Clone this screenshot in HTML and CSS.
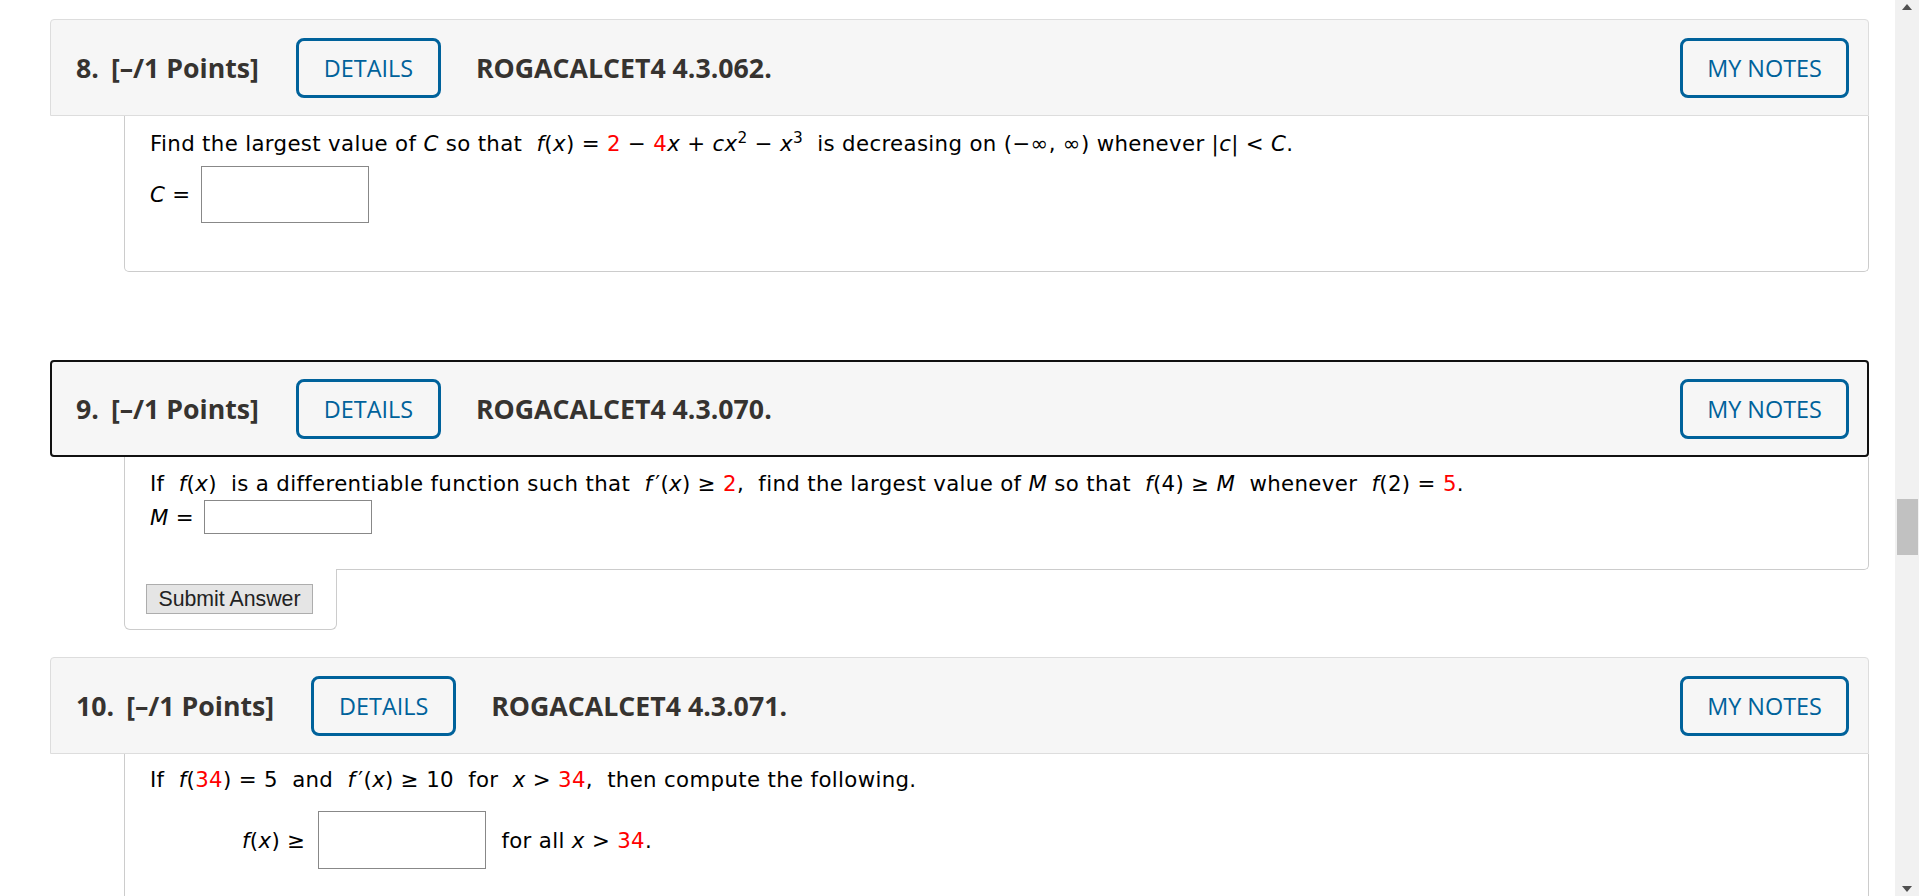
FILE: index.html
```html
<!DOCTYPE html>
<html>
<head>
<meta charset="utf-8">
<link rel="stylesheet" href="styles.css">
</head>
<body>
<div class="page">

  <section class="q q8">
    <div class="qhead">
      <span class="qnum">8.</span><span class="qpts">[–/1 Points]</span>
      <span class="obtn details">DETAILS</span>
      <span class="qid">ROGACALCET4 4.3.062.</span>
      <span class="obtn notes">MY NOTES</span>
    </div>
    <div class="qbody b8">
      <p class="line">Find the largest value of <i>C</i> so that&nbsp; <i>f</i>(<i>x</i>) = <span class="red">2</span> − <span class="red">4</span><i>x</i> + <i>cx</i><sup>2</sup> − <i>x</i><sup>3</sup>&nbsp; is decreasing on (−∞, ∞) whenever |<i>c</i>| &lt; <i>C</i>.</p>
      <div class="ansrow r8"><span class="lbl"><i>C</i> =</span><span class="box h57"></span></div>
    </div>
  </section>

  <section class="q q9">
    <div class="qhead active">
      <span class="qnum">9.</span><span class="qpts">[–/1 Points]</span>
      <span class="obtn details">DETAILS</span>
      <span class="qid">ROGACALCET4 4.3.070.</span>
      <span class="obtn notes">MY NOTES</span>
    </div>
    <div class="qbody b9">
      <p class="line">If&nbsp; <i>f</i>(<i>x</i>)&nbsp; is a differentiable function such that&nbsp; <i>f</i><span class="pr">′</span>(<i>x</i>) ≥ <span class="red">2</span>,&nbsp; find the largest value of <i>M</i> so that&nbsp; <i>f</i>(4) ≥ <i>M</i>&nbsp; whenever&nbsp; <i>f</i>(2) = <span class="red">5</span>.</p>
      <div class="ansrow r9"><span class="lbl"><i>M</i> =</span><span class="box h34"></span></div>
    </div>
    <div class="submitbox"><span class="submit">Submit Answer</span></div>
  </section>

  <section class="q q10">
    <div class="qhead">
      <span class="qnum">10.</span><span class="qpts">[–/1 Points]</span>
      <span class="obtn details">DETAILS</span>
      <span class="qid">ROGACALCET4 4.3.071.</span>
      <span class="obtn notes">MY NOTES</span>
    </div>
    <div class="qbody b10">
      <p class="line">If&nbsp; <i>f</i>(<span class="red">34</span>) = 5&nbsp; and&nbsp; <i>f</i><span class="pr">′</span>(<i>x</i>) ≥ 10&nbsp; for&nbsp; <i>x</i> &gt; <span class="red">34</span>,&nbsp; then compute the following.</p>
      <div class="ansrow r10"><span class="lbl"><i>f</i>(<i>x</i>) ≥</span><span class="box h58"></span><span class="after">for all <i>x</i> &gt; <span class="red">34</span>.</span></div>
    </div>
  </section>

</div>
<div class="scrollbar">
  <span class="arrow up"></span>
  <span class="thumb"></span>
  <span class="arrow down"></span>
</div>
</body>
</html>
```

FILE: styles.css
```css
html, body {
  margin: 0;
  padding: 0;
  height: 896px;
  overflow: hidden;
  background: #fff;
}
body {
  display: flex;
  font-family: "DejaVu Sans", Verdana, sans-serif;
  color: #000;
}
.page {
  flex: 1;
  padding: 19px 26px 0 50px;
  box-sizing: border-box;
}
.q {
  display: flex;
  flex-direction: column;
}
.q8 { margin-bottom: 88px; }
.q9 { margin-bottom: 27px; }

.qhead {
  display: flex;
  align-items: center;
  height: 97px;
  box-sizing: border-box;
  background: #f6f6f6;
  border: 1px solid #dddddd;
  border-radius: 4px 4px 0 0;
  padding: 0 19px 0 25px;
  font-family: "Open Sans", "Noto Sans", sans-serif;
  color: #363330;
}
.qhead.active {
  border: 2px solid #111;
  border-radius: 4px;
  padding: 0 18px 0 24px;
}
.qnum {
  font-weight: 700;
  font-size: 26.7px;
  margin-right: 12px;
}
.qpts {
  font-weight: 700;
  font-size: 26.7px;
}
.qid {
  font-weight: 700;
  font-size: 26.7px;
  margin-left: 35px;
}
.obtn {
  display: flex;
  align-items: center;
  justify-content: center;
  height: 60px;
  box-sizing: border-box;
  border: 3px solid #00629b;
  border-radius: 8px;
  color: #00629b;
  font-size: 23.4px;
  font-weight: 400;
}
.details {
  width: 145px;
  margin-left: 37px;
}
.notes {
  width: 169px;
  margin-left: auto;
}

.qbody {
  margin-left: 74px;
  border: 1px solid #cccccc;
  border-top: none;
  border-radius: 0 0 5px 5px;
  background: #fff;
  padding: 14px 25px 0 25px;
  font-size: 21.3px;
  letter-spacing: 0.34px;
}
.line {
  margin: 0;
  line-height: 28px;
  white-space: nowrap;
}
.line sup {
  font-size: 0.72em;
  line-height: 0;
  vertical-align: 0.55em;
}
.pr { margin-left: 3px; }
.red { color: #ff0000; }
i { font-style: italic; }

.ansrow {
  display: flex;
  align-items: center;
}
.lbl { margin-right: 10px; }
.box {
  display: block;
  width: 168px;
  box-sizing: border-box;
  border: 1px solid #888;
  background: #fff;
}
.h57 { height: 57px; }
.h34 { height: 34px; }
.h58 { height: 58px; }

.b8 { padding-bottom: 48px; }
.r8 { margin-top: 8px; }

.b9 {
  padding-top: 13px;
  padding-bottom: 35px;
  border-radius: 0 0 5px 0;
}
.r9 { margin-top: 2px; }

.submitbox {
  margin-left: 74px;
  margin-top: -1px;
  width: 213px;
  height: 61px;
  box-sizing: border-box;
  border: 1px solid #cccccc;
  border-top: none;
  border-radius: 0 0 6px 6px;
  background: #fff;
  padding: 15px 0 0 21px;
}
.submit {
  display: flex;
  align-items: center;
  justify-content: center;
  width: 167px;
  height: 30px;
  box-sizing: border-box;
  border: 1px solid #adadad;
  background: #e5e5e5;
  font-family: "Liberation Sans", Arial, sans-serif;
  font-size: 21.3px;
  color: #222;
}

.b10 {
  padding-top: 12px;
  height: 200px;
  border-bottom: none;
}
.r10 {
  margin-top: 17px;
  padding-left: 92px;
}
.r10 .lbl { margin-right: 13px; }
.after { margin-left: 15px; }

.scrollbar {
  width: 24px;
  height: 896px;
  background: #f1f1f1;
  position: relative;
  flex: none;
}
.arrow {
  position: absolute;
  left: 7px;
  width: 0;
  height: 0;
  border-left: 5.5px solid transparent;
  border-right: 5.5px solid transparent;
}
.arrow.up {
  top: 4px;
  border-bottom: 6px solid #505050;
}
.arrow.down {
  bottom: 4px;
  border-top: 6px solid #505050;
}
.thumb {
  position: absolute;
  left: 2px;
  right: 1px;
  top: 499px;
  height: 56px;
  background: #c1c1c1;
}
```
